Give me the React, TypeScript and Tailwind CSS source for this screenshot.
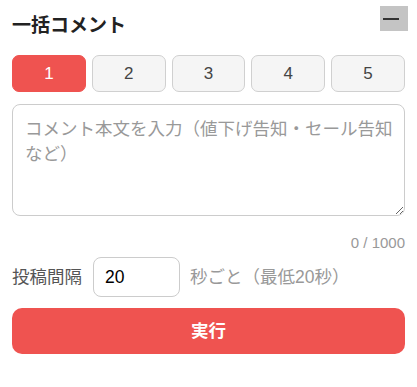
import React, { useState } from 'react';

const tabs = [1, 2, 3, 4, 5];

export default function App() {
  const [active, setActive] = useState(1);
  const [text, setText] = useState('');
  const [interval, setInterval] = useState('20');

  return (
    <div
      className="w-[417px] bg-white px-3 pt-[6px] text-[#333]"
      style={{ fontFamily: '"Liberation Sans", "Noto Sans CJK JP", sans-serif' }}
    >
      <div className="flex items-start justify-between">
        <h2 className="mt-[6px] text-[19px] font-bold leading-[28px] text-[#222]">一括コメント</h2>
        <button className="-mr-[3px] flex h-[25px] w-[28px] items-center bg-[#c4c4c4]">
          <span className="ml-[3px] block h-[2px] w-4 bg-[#333]"></span>
        </button>
      </div>

      <div className="mt-[15px] grid h-[37px] grid-cols-5 gap-[6px]">
        {tabs.map((n) => (
          <button
            key={n}
            onClick={() => setActive(n)}
            className={
              n === active
                ? 'rounded-[7px] border border-[#ef5350] bg-[#ef5350] text-[17px] text-white'
                : 'rounded-[7px] border border-[#d0d0d0] bg-[#f5f5f5] text-[17px] text-[#444]'
            }
          >
            {n}
          </button>
        ))}
      </div>

      <textarea
        value={text}
        onChange={(e) => setText(e.target.value)}
        placeholder="コメント本文を入力（値下げ告知・セール告知など）"
        className="mt-3 block h-[112px] w-full rounded-lg border border-[#cccccc] py-3 pl-3 pr-[10px] text-[17.5px] leading-[25px] text-[#222] outline-none placeholder:text-[#999]"
      />

      <div className="mt-[17px] text-right text-[15px] leading-5 text-[#999]">{text.length} / 1000</div>

      <div className="mt-[4px] flex items-center">
        <span className="text-[17.5px] text-[#555]">投稿間隔</span>
        <input
          value={interval}
          onChange={(e) => setInterval(e.target.value)}
          className="ml-[11px] h-10 w-[87px] rounded-lg border border-[#cccccc] px-[11px] text-[17.5px] text-black outline-none"
        />
        <span className="ml-[10px] text-[17.5px] text-[#999]">秒ごと（最低20秒）</span>
      </div>

      <button className="mt-[11px] h-[46px] w-full rounded-[10px] bg-[#ef5350] text-[17.5px] font-bold text-white">
        実行
      </button>
    </div>
  );
}
